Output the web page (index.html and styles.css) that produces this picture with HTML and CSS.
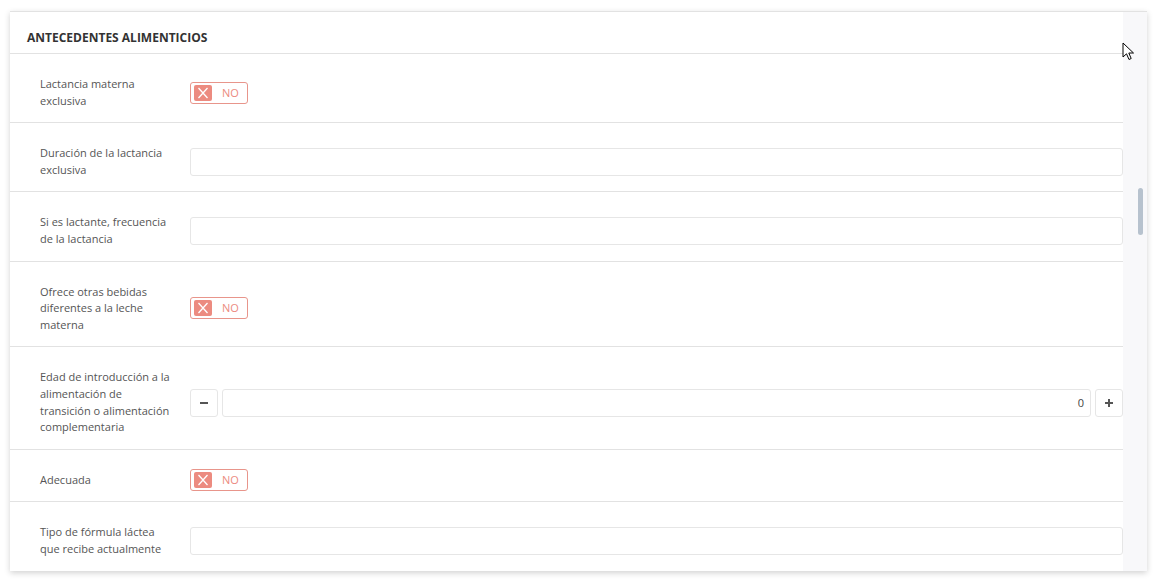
FILE: index.html
```html
<!DOCTYPE html>
<html lang="es">
<head>
<meta charset="utf-8">
<title>Antecedentes alimenticios</title>
<link rel="stylesheet" href="styles.css">
</head>
<body>
<div class="card">
  <div class="content">
    <div class="header">ANTECEDENTES ALIMENTICIOS</div>

    <div class="row">
      <div class="label">Lactancia materna exclusiva</div>
      <div class="control">
        <span class="toggle"><span class="tx"><svg width="18" height="16" viewBox="0 0 18 16"><path d="M4.5 3 L13.5 13 M13.5 3 L4.5 13" stroke="#fff" stroke-width="1.3" fill="none"/></svg></span><span class="tno">NO</span></span>
      </div>
    </div>

    <div class="row">
      <div class="label">Duración de la lactancia exclusiva</div>
      <div class="control"><div class="input"></div></div>
    </div>

    <div class="row">
      <div class="label">Si es lactante, frecuencia de la lactancia</div>
      <div class="control"><div class="input"></div></div>
    </div>

    <div class="row">
      <div class="label">Ofrece otras bebidas diferentes a la leche materna</div>
      <div class="control">
        <span class="toggle"><span class="tx"><svg width="18" height="16" viewBox="0 0 18 16"><path d="M4.5 3 L13.5 13 M13.5 3 L4.5 13" stroke="#fff" stroke-width="1.3" fill="none"/></svg></span><span class="tno">NO</span></span>
      </div>
    </div>

    <div class="row">
      <div class="label">Edad de introducción a la alimentación de transición o alimentación complementaria</div>
      <div class="control stepper">
        <div class="sbtn"><svg width="10" height="10" viewBox="0 0 10 10"><path d="M1 5 H9" stroke="#555" stroke-width="2"/></svg></div>
        <div class="input num">0</div>
        <div class="sbtn"><svg width="10" height="10" viewBox="0 0 10 10"><path d="M1 5 H9 M5 1 V9" stroke="#555" stroke-width="2"/></svg></div>
      </div>
    </div>

    <div class="row">
      <div class="label">Adecuada</div>
      <div class="control">
        <span class="toggle"><span class="tx"><svg width="18" height="16" viewBox="0 0 18 16"><path d="M4.5 3 L13.5 13 M13.5 3 L4.5 13" stroke="#fff" stroke-width="1.3" fill="none"/></svg></span><span class="tno">NO</span></span>
      </div>
    </div>

    <div class="row">
      <div class="label">Tipo de fórmula láctea que recibe actualmente</div>
      <div class="control"><div class="input"></div></div>
    </div>
  </div>
  <div class="track"><div class="thumb"></div></div>
</div>
<svg class="cursor" width="14" height="20" viewBox="0 0 14 20"><path d="M1 1 L1 15 L4.5 11.8 L7 17.5 L9.2 16.5 L6.8 11 L11.5 11 Z" fill="#fff" stroke="#000" stroke-width="1" stroke-linejoin="round"/></svg>
</body>
</html>
```

FILE: styles.css
```css
html, body {
  margin: 0;
  padding: 0;
  background: #ffffff;
}
body {
  width: 1158px;
  height: 581px;
  overflow: hidden;
  position: relative;
  font-family: "Open Sans", "Liberation Sans", sans-serif;
  color: #555;
}
.card {
  margin: 11px 0 0 10px;
  width: 1137px;
  height: 559px;
  display: flex;
  background: #fff;
  border-top: 1px solid #e2e2e2;
  box-shadow: 0 2px 6px rgba(0,0,0,0.18);
  overflow: hidden;
}
.content {
  flex: 1;
  min-width: 0;
}
.header {
  padding: 18px 0 7px 17px;
  font-size: 12px;
  line-height: 16px;
  font-weight: 700;
  color: #333;
  border-bottom: 1px solid #e2e2e2;
}
.row {
  display: flex;
  align-items: center;
  padding: 0 0 0 30px;
  border-bottom: 1px solid #e2e2e2;
}
.label {
  width: 150px;
  padding: 22px 18px 13px 0;
  box-sizing: border-box;
  flex: none;
  font-size: 11px;
  line-height: 16.6px;
  color: #555;
}
.control {
  flex: 1;
  display: flex;
  align-items: center;
  margin-top: 9px;
}
.input {
  flex: 1;
  height: 28px;
  box-sizing: border-box;
  border: 1px solid #e6e6e6;
  border-radius: 3px;
  background: #fff;
}
.input.num {
  display: flex;
  align-items: center;
  justify-content: flex-end;
  padding-right: 6px;
  font-size: 11px;
  color: #444;
}
.stepper {
  gap: 4px;
}
.sbtn {
  width: 28px;
  height: 28px;
  box-sizing: border-box;
  border: 1px solid #e6e6e6;
  border-radius: 3px;
  display: flex;
  align-items: center;
  justify-content: center;
  flex: none;
}
.sbtn svg { display: block; }
.toggle {
  display: inline-flex;
  align-items: center;
  width: 58px;
  height: 22px;
  box-sizing: border-box;
  border: 1px solid #e8958b;
  border-radius: 3px;
  padding-left: 3px;
}
.tx {
  width: 18px;
  height: 16px;
  background: #ec8b80;
  border-radius: 2px;
  display: block;
}
.tx svg { display: block; }
.tno {
  margin-left: 10px;
  font-size: 11px;
  color: #ec8b80;
  line-height: 16px;
}
.track {
  width: 24px;
  flex: none;
  background: #f8f8fa;
  position: relative;
}
.thumb {
  position: absolute;
  left: 15px;
  top: 176px;
  width: 5px;
  height: 47px;
  border-radius: 3px;
  background: #b7c2ce;
}
.cursor {
  position: absolute;
  left: 1122px;
  top: 42px;
}
```
